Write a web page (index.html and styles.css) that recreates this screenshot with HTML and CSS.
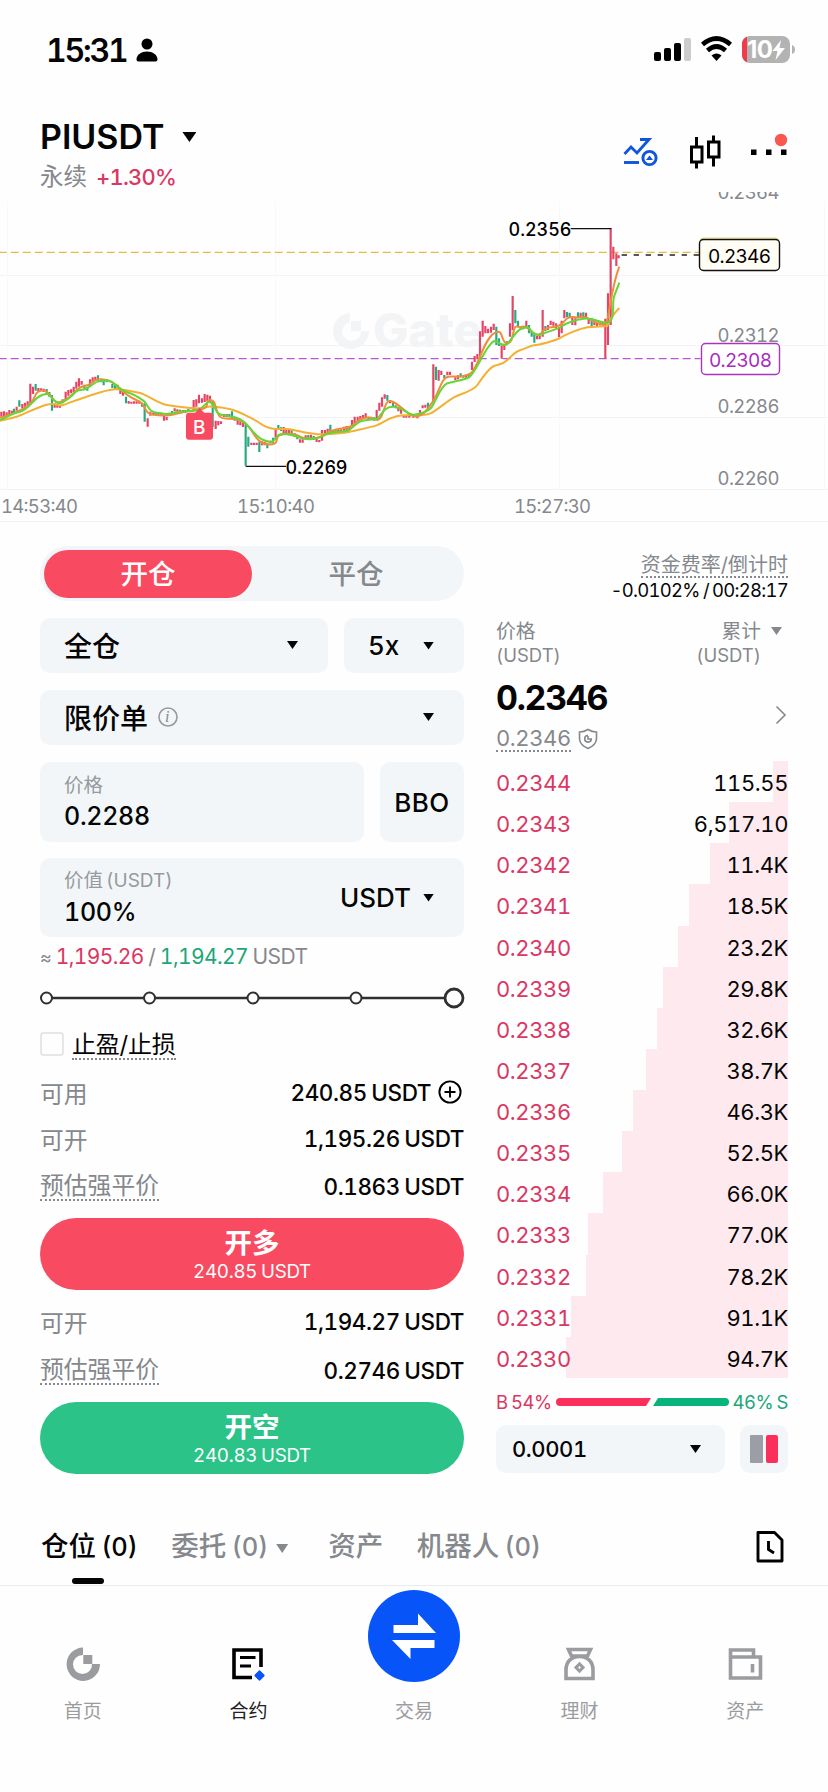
FILE: index.html
```html
<!DOCTYPE html>
<html lang="zh-CN">
<head>
<meta charset="utf-8">
<title>PIUSDT</title>
<link rel="stylesheet" href="styles.css">
</head>
<body>
<div class="status">
  <span class="clock">15:31</span>
  <svg class="person" width="22" height="24" viewBox="0 0 22 24"><circle cx="11" cy="6" r="5.5"/><path d="M.5 21.5C.5 16.500 5.500 13.500 11 13.500S21.500 16.500 21.500 21.500Q21.500 23.500 19.500 23.500H2.500Q.5 23.500.5 21.500Z"/></svg>
  <svg class="signals" width="144" height="30" viewBox="0 0 144 30">
    <rect x="1" y="17" width="7" height="9" rx="2"/><rect x="11" y="13" width="7" height="13" rx="2"/><rect x="21" y="8" width="7" height="18" rx="2"/><rect x="31" y="3" width="7" height="23" rx="2" fill="#ccc"/>
    <g fill="none" stroke="#000" stroke-width="4.600"><path d="M49.500 9.500Q63.500-2.500 77.500 9.500"/><path d="M54.500 15.500Q63.500 7.500 72.500 15.500"/></g>
    <path d="M58.500 20.500Q63.500 16.500 68.500 20.500L63.500 26Z"/>
    <rect x="89" y="1" width="48" height="27" rx="8" fill="#b3b3b3"/><path d="M94 1.800V27.200A8 8 0 0 1 89 20V9A8 8 0 0 1 94 1.800Z" fill="#f23b48"/><path d="M139 10Q142 11 142 14.500T139 19Z" fill="#b3b3b3"/>
    <text x="94" y="22.500" class="battery-text">10</text><path d="M128 5L119.500 16H124.500L122.500 25L132 13H126.500Z" fill="#fff"/>
  </svg>
</div>

<header class="header">
  <div class="pair">
    <div class="pair-name">PIUSDT <i class="caret caret-lg"></i></div>
    <div class="pair-sub"><span>永续</span><b>+1.30%</b></div>
  </div>
  <svg class="header-icons" width="170" height="46" viewBox="0 0 170 46">
    <g fill="none" stroke="#0f55de" stroke-width="2.900"><path d="M1.500 24L8 17L14 23L26 9.500H17"/><path d="M1 32.500H16"/><circle cx="26.500" cy="28" r="6.600"/></g><path d="M23 30L26.500 25.500L30 30Z" fill="#0f55de"/>
    <g fill="none" stroke="#000" stroke-width="3"><rect x="68.500" y="17" width="10.500" height="15"/><path d="M73.500 7V16M73.500 33V38.500"/><rect x="85.500" y="12" width="10.500" height="15"/><path d="M90.500 5.500V11M90.500 28V36.500"/></g>
    <path d="M128 19.500h5.500v5.500h-5.500zM143 19.500h5.500v5.500h-5.500zM158 19.500h5.500v5.500h-5.500z"/><circle cx="158" cy="10" r="6.200" fill="#f9574f"/>
  </svg>
</header>

<svg class="chart" width="828" height="330" viewBox="0 0 828 330">
  <g stroke="#f2f3f4" stroke-width="1"><path d="M0 83.500H828M0 153.500H828M0 225.500H828M0 297.500H828M0 329.500H828"/><path stroke="#f8f9f9" d="M275.500 10V297M559.500 10V297M7.500 10V297M824.500 10V297"/></g>
  <g class="watermark"><path d="M350 121A18 18 0 1 0 369 139H361A9.500 9.500 0 1 1 350 130Z"/><rect x="351" y="129" width="10" height="10"/><text x="373" y="155">Gate</text></g>
  <g transform="translate(0 -2) scale(.33333)" fill="none">
    <g stroke="#e5bb45" stroke-width="4"><path d="M-4 187H2100" stroke-dasharray="24 12"/></g>
    <path d="M-4 506H2102" stroke="#b658d0" stroke-width="4" stroke-dasharray="24 12"/>
    <path d="M1865 195H2098" stroke="#222" stroke-width="4" stroke-dasharray="16 20"/>
    <path class="up" d="M4 665V680M12 664V678M20 667V678M28 660V676M36 662V672M50 650V662M67 642V655M75 638V650M83 634V645M91 581V640M99 590V612M115 594V605M123 595V603M131 596V606M164 640V653M172 645V653M180 645V653M197 605V630M205 600V617M213 598V610M221 590V607M229 575V596M237 565V590M245 573V584M270 568V590M278 562V578M286 560V570M353 584V600M361 594V612M369 600V617M386 633V641M394 635V641M402 634V641M410 634V641M418 632V641M443 685V710M451 665V677M460 668V676M475 668V676M484 670V678M492 676V692M500 680V691M508 668V677M524 655V664M532 658V665M540 659V666M549 660V668M581 630V662M589 628V650M597 614V640M606 625V638M614 612V636M622 614V634M630 617V636M647 692V717M655 693V706M663 694V702M672 672V681M680 672V682M713 685V704M721 694V706M729 698V711M754 758V765M762 758V765M770 758V765M786 754V766M794 755V766M811 752V760M827 716V745M851 711V734M859 718V732M867 720V729M884 730V740M900 748V758M908 748V758M917 736V746M933 734V745M950 746V756M958 750V757M966 720V752M975 720V732M983 716V728M999 720V728M1015 719V728M1023 718V728M1032 710V727M1040 708V726M1048 708V721M1056 690V713M1064 680V702M1073 680V694M1081 678V690M1089 675V684M1097 670V682M1106 680V690M1130 660V688M1138 638V662M1146 622V650M1154 613V626M1170 630V640M1187 646V655M1195 650V664M1203 655V671M1211 676V683M1219 676V683M1228 676V683M1240 676V683M1252 675V685M1260 660V674M1268 646V655M1276 644V653M1300 523V635M1316 540V572M1324 542V555M1342 545V556M1350 545V555M1366 562V570M1374 556V568M1398 554V563M1416 515V540M1424 498V516M1432 492V508M1440 424V505M1448 392V440M1456 408V430M1464 416V430M1473 410V428M1481 401V420M1505 466V506M1513 462V480M1521 454V465M1530 400V440M1538 318V420M1562 410V420M1570 408V418M1579 392V415M1611 438V448M1619 436V448M1628 360V440M1644 405V420M1652 392V405M1660 395V407M1668 400V415M1677 412V442M1685 392V430M1693 360V385M1717 380V405M1726 385V406M1742 368V385M1758 368V382M1766 385V402M1783 390V405M1791 397V408M1800 398V406M1808 396V407M1816 386V506M1824 310V465M1832 114V405M1840 170V208M1849 190V228M1856 196V205"/>
    <path class="down" d="M42 656V670M58 631V650M107 582V602M140 597V615M148 606V620M156 615V662M188 628V640M253 584V594M262 590V602M294 556V572M303 566V577M311 572V586M320 568V577M337 582V594M345 585V600M378 620V640M426 638V650M434 640V695M467 667V675M516 663V674M556 660V668M565 657V666M638 632V712M688 672V682M696 664V684M704 680V692M737 700V827M745 740V770M778 755V786M802 760V775M819 743V758M835 705V718M843 712V723M875 720V732M892 736V748M925 735V746M941 738V750M991 704V725M1007 720V730M1114 680V690M1122 682V692M1162 615V632M1179 637V650M1284 638V654M1308 530V570M1333 555V565M1382 550V562M1390 555V563M1406 552V564M1489 410V465M1497 445V468M1546 360V400M1554 392V412M1587 405V430M1595 425V440M1603 430V458M1636 408V424M1701 366V382M1709 368V383M1734 367V385M1750 367V386M1775 385V410"/>
    <path stroke="#f4b131" stroke-width="6" d="M0 692C20 688 35 684 50 680S110 652 140 644S175 650 190 645S245 624 260 620S310 600 350 597C375 599 400 604 420 609S475 641 500 645S560 654 590 655S615 648 640 650S685 655 700 660S765 688 780 700S805 713 820 716S855 715 870 718S910 727 920 728S955 734 970 733S1030 730 1050 725S1115 711 1130 706S1160 687 1190 679S1272 680 1292 670S1340 634 1362 622S1419 604 1432 585S1468 534 1482 528S1506 526 1522 510S1547 484 1562 480S1590 467 1602 466S1670 452 1682 443S1740 416 1762 412L1822 408Q1832 380 1858 354"/>
    <path stroke="#f28b3b" stroke-width="6" d="M0 684C25 674 50 670 80 650S100 612 115 605S140 600 155 622S180 638 195 630S225 603 240 593S260 592 275 578S315 565 335 576S360 600 385 617S425 630 435 655S475 676 500 676S540 664 590 660S610 632 630 630S645 665 660 680S705 676 735 700S765 760 805 763S820 740 840 735S885 730 900 740S960 747 980 730S1045 718 1060 704S1100 675 1125 688S1150 640 1165 634S1205 655 1230 673S1275 670 1297 637S1325 562 1345 560S1390 565 1412 550S1450 450 1482 430S1500 460 1522 460S1535 405 1552 410S1570 400 1592 422S1620 435 1632 420S1675 420 1692 395S1730 388 1742 381S1775 394 1795 400S1820 405 1825 375S1842 270 1858 230"/>
    <path stroke="#65d538" stroke-width="6" d="M0 690C20 682 35 670 60 665S100 628 120 618S145 609 160 628S188 640 210 622S225 602 240 600S260 598 275 585S320 566 335 576S360 600 380 606S415 621 430 632S445 668 470 668S495 678 520 669S565 667 590 661S620 625 635 640S645 672 670 676S715 680 735 698S765 740 790 750S820 756 830 740S880 735 900 743S955 748 975 735S1035 729 1050 718S1070 700 1080 695S1120 689 1130 687S1150 648 1180 650S1225 676 1242 674S1280 667 1292 655S1322 586 1342 580S1392 570 1407 562S1450 491 1462 475S1480 448 1492 456S1515 470 1524 460S1547 425 1562 417S1586 411 1592 420S1610 439 1632 430S1673 418 1687 408S1720 390 1752 386S1785 396 1817 398S1835 340 1842 320L1858 278"/>
    <path stroke="#111" stroke-width="4" d="M737 829H858M1712 116H1834"/>
    <g fill="#f84b61"><rect x="558" y="668" width="81" height="81" rx="9"/><path d="M585 669L599 653L613 669Z"/></g>
  </g>
  <text class="buy-mark" x="193" y="241.500">B</text>
  <text class="extreme" x="285.500" y="282" textLength="62">0.2269</text>
  <text class="extreme" x="508.500" y="44" textLength="63">0.2356</text>
  <g class="axis">
    <text x="717.500" y="7" textLength="62">0.2364</text><text x="717.500" y="150" textLength="62">0.2312</text><text x="717.500" y="221" textLength="62">0.2286</text><text x="717.500" y="293" textLength="62">0.2260</text>
    <text x="1" y="321" textLength="77">14:53:40</text><text x="237" y="321" textLength="78">15:10:40</text><text x="514" y="321" textLength="77">15:27:30</text>
  </g>
  <rect x="699.500" y="46" width="80" height="32" rx="4" fill="#fff" stroke="#e5d777"/>
  <rect x="699.500" y="47.500" width="80" height="31" rx="4" fill="#fffcf4" stroke="#111" stroke-width="1.400"/>
  <rect x="701.500" y="151.500" width="78" height="31" rx="4" fill="#fff" stroke="#a735bd" stroke-width="1.400"/>
  <text class="tag" x="708" y="71" textLength="63">0.2346</text><text class="tag tag-purple" x="709" y="175" textLength="63">0.2308</text>
</svg>

<main class="trade">
  <section class="form">
    <div class="mode"><span class="mode-on">开仓</span><span>平仓</span></div>
    <div class="row row-select"><div class="box grow">全仓<i class="caret"></i></div><div class="box lever">5x<i class="caret"></i></div></div>
    <div class="row row-select"><div class="box grow">限价单<svg class="info" width="22" height="22" viewBox="0 0 22 22"><circle cx="11" cy="11" r="9" fill="none" stroke="#96999e" stroke-width="1.600"/><text x="8" y="16">i</text></svg><i class="caret"></i></div></div>
    <div class="row row-input"><div class="box grow field"><small>价格</small><span>0.2288</span></div><div class="box bbo">BBO</div></div>
    <div class="row row-input last-input"><div class="box grow"><div class="field-inner"><small>价值<em> (USDT)</em></small><span>100%</span></div><span class="unit">USDT</span><i class="caret"></i></div></div>
    <div class="approx"><span class="tilde">≈</span> <span class="red">1,195.26</span> / <span class="green">1,194.27</span> USDT</div>
    <svg class="slider" width="426" height="24" viewBox="0 0 426 24" fill="#fff" stroke="#303030"><path d="M6 12H414" stroke-width="2.600"/><g stroke-width="2"><circle cx="6.500" cy="12" r="5.500"/><circle cx="109.500" cy="12" r="5.500"/><circle cx="213" cy="12" r="5.500"/><circle cx="316" cy="12" r="5.500"/></g><circle cx="414" cy="12" r="9" stroke-width="2.800"/></svg>
    <div class="tpsl"><i class="check"></i><span class="dotted">止盈/止损</span></div>
    <div class="info-row avail"><label>可用</label><span>240.85 USDT</span><svg width="24" height="24" viewBox="0 0 24 24" fill="none" stroke="#000" stroke-width="1.900"><circle cx="12" cy="12" r="10.600"/><path d="M6.500 12H17.500M12 6.500V17.500"/></svg></div>
    <div class="info-row"><label>可开</label><span>1,195.26 USDT</span></div>
    <div class="info-row liq"><label class="dotted">预估强平价</label><span>0.1863 USDT</span></div>
    <div class="action long"><b>开多</b><span>240.85 USDT</span></div>
    <div class="info-row after"><label>可开</label><span>1,194.27 USDT</span></div>
    <div class="info-row liq"><label class="dotted">预估强平价</label><span>0.2746 USDT</span></div>
    <div class="action short"><b>开空</b><span>240.83 USDT</span></div>
  </section>

  <section class="book">
    <div class="funding"><span class="dotted">资金费率/倒计时</span></div>
    <div class="funding-value">-0.0102% / 00:28:17</div>
    <div class="book-head"><div>价格<br><em>(USDT)</em></div><div class="head-right">累计<br><em>(USDT)</em></div><i class="caret caret-gray"></i></div>
    <div class="last"><div><div class="last-price">0.2346</div><div class="mark"><span class="dotted">0.2346</span><svg width="20" height="22" viewBox="0 0 20 22" fill="none" stroke="#85888c" stroke-width="1.600"><path d="M10 1.500Q14 4 18.500 4V11Q18 17 10 20.500Q2 17 1.500 11V4Q6 4 10 1.500Z"/><path d="M10 7.500A3.300 3.300 0 1 0 13.300 11H10V8"/></svg></div></div><svg class="chevron" width="12" height="20" viewBox="0 0 12 20" fill="none" stroke="#85888c" stroke-width="1.600"><path d="M1.500 1.500L10 10L1.500 18.500"/></svg></div>
    <div class="orders">
      <div class="order"><i style="width:15px"></i><span>0.2344</span><b>115.55</b></div>
      <div class="order"><i style="width:59.500px"></i><span>0.2343</span><b>6,517.10</b></div>
      <div class="order"><i style="width:78px"></i><span>0.2342</span><b>11.4K</b></div>
      <div class="order"><i style="width:99px"></i><span>0.2341</span><b>18.5K</b></div>
      <div class="order"><i style="width:110px"></i><span>0.2340</span><b>23.2K</b></div>
      <div class="order"><i style="width:125.500px"></i><span>0.2339</span><b>29.8K</b></div>
      <div class="order"><i style="width:131px"></i><span>0.2338</span><b>32.6K</b></div>
      <div class="order"><i style="width:142px"></i><span>0.2337</span><b>38.7K</b></div>
      <div class="order"><i style="width:155.500px"></i><span>0.2336</span><b>46.3K</b></div>
      <div class="order"><i style="width:166px"></i><span>0.2335</span><b>52.5K</b></div>
      <div class="order"><i style="width:185px"></i><span>0.2334</span><b>66.0K</b></div>
      <div class="order"><i style="width:200px"></i><span>0.2333</span><b>77.0K</b></div>
      <div class="order"><i style="width:202px"></i><span>0.2332</span><b>78.2K</b></div>
      <div class="order"><i style="width:217.500px"></i><span>0.2331</span><b>91.1K</b></div>
      <div class="order"><i style="width:222px"></i><span>0.2330</span><b>94.7K</b></div>
    </div>
    <div class="ratio"><span class="red">B 54%</span><svg width="173" height="8" viewBox="0 0 173 8"><path d="M4 0H95L90 8H4A4 4 0 0 1 4 0Z" fill="#fb305a"/><path d="M102 0H169A4 4 0 0 1 169 8H97Z" fill="#07b57c"/></svg><span class="green">46% S</span></div>
    <div class="precision"><div class="box grow">0.0001<i class="caret"></i></div><div class="box depth"><i></i><i></i></div></div>
  </section>
</main>

<div class="tabs">
  <span class="tab tab-on">仓位 <em>(0)</em></span><span class="tab tab-orders">委托 <em>(0)</em><i class="caret caret-gray"></i></span><span class="tab tab-assets">资产</span><span class="tab">机器人 <em>(0)</em></span>
  <svg class="history" width="28" height="34" viewBox="0 0 28 34" fill="none" stroke="#000" stroke-width="2.900" stroke-linejoin="round"><path d="M2 2.500H18.500L26 10V31H2Z"/><path d="M12.500 11V19.500L18 23" stroke-linejoin="miter"/></svg>
</div>

<nav class="nav">
  <div class="nav-item"><svg width="36" height="36" viewBox="0 0 36 36" fill="#9b9c9f"><path d="M18 1.500A16.700 16.700 0 1 0 35 18H27A9.500 9.500 0 1 1 18 9Z"/><rect x="18.300" y="9" width="9" height="9"/></svg><span>首页</span></div>
  <div class="nav-item nav-on"><svg width="36" height="36" viewBox="0 0 36 36"><path d="M31 21V4H4V31.500H22" fill="none" stroke="#000" stroke-width="3.600"/><path d="M10 11.500H25.500M10 20H21" stroke="#000" stroke-width="3"/><rect x="25.500" y="25.500" width="8" height="8" rx="1.500" fill="#0755f8" transform="rotate(45 29.500 29.500)"/></svg><span>合约</span></div>
  <div class="nav-item nav-trade"><div class="swap"><svg width="46" height="46" viewBox="0 0 46 46" fill="#fff"><path d="M2.500 12H27V.5L45 20H2.500Z"/><path d="M43.500 27V35H19.500V46L1 27Z"/></svg></div><span>交易</span></div>
  <div class="nav-item"><svg width="36" height="36" viewBox="0 0 36 36" fill="none" stroke="#9b9c9f" stroke-width="3.600"><path d="M6.500 3.500H28.500L25.500 10H9.500Z"/><path d="M4 32.500V24C4 15 10 10.500 17.500 10.500S31 15 31 24V32.500Z"/><rect x="15" y="19" width="5" height="5" stroke-width="3" transform="rotate(45 17.500 21.500)"/></svg><span>理财</span></div>
  <div class="nav-item"><svg width="36" height="36" viewBox="0 0 36 36" fill="none" stroke="#9b9c9f" stroke-width="3.600"><path d="M26.500 10V4H3.500V32H33.500V11H3.500"/><path d="M25.500 18V26.500"/></svg><span>资产</span></div>
</nav>
</body>
</html>
```

FILE: styles.css
```css
* { box-sizing: border-box; }
body { margin: 0; width: 828px; height: 1792px; overflow: hidden; background: #fefefe; color: #050505; font-family: Inter, "Noto Sans CJK SC", sans-serif; font-variant-numeric: tabular-nums; word-spacing: -1px; }
em, i { font-style: normal; }
.red { color: #da3763; }
.green { color: #1ba777; }

.status { height: 100px; padding: 35px 31px 0 46px; display: flex; align-items: flex-start; }
.clock { font-size: 32px; line-height: 32px; font-weight: 600; width: 90px; letter-spacing: -2.200px; }
.person { margin-top: 3px; }
.signals { margin-left: auto; }
.battery-text { font: 700 24px Inter, sans-serif; fill: #fff; letter-spacing: -.5px; }

.header { height: 92px; padding: 18px 35px 0 40px; display: flex; justify-content: space-between; }
.pair-name { font-size: 34px; line-height: 38px; font-weight: 600; display: flex; align-items: center; gap: 18px; letter-spacing: 0; }
.pair-sub { display: flex; gap: 9px; font-size: 23.500px; line-height: 30px; margin-top: 6px; color: #85888c; }
.pair-sub b { font-size: 22px; font-weight: 500; color: #da3763; letter-spacing: -.8px; }
.header-icons { margin-top: 12px; }
.caret { width: 11px; height: 8px; background: currentColor; clip-path: polygon(0 0, 100% 0, 50% 100%); flex: none; }
.caret-lg { width: 14px; height: 10px; }
.caret-gray { background: #85888c; }

.chart { display: block; }
.chart text { font-family: Inter, sans-serif; }
.up { stroke: #e34565; stroke-width: 6.500; }
.down { stroke: #26aa82; stroke-width: 6.500; }
.watermark { fill: #f3f4f5; }
.watermark text { font-size: 47px; font-weight: 800; }
.extreme { font-size: 18px; font-weight: 500; }
.axis { font-size: 18.500px; fill: #85888c; }
.tag { font-size: 19px; }
.tag-purple { fill: #a72dbe; }
.buy-mark { font-size: 19px; font-weight: 500; fill: #fff; }

.trade { height: 986px; padding: 24px 40px 0; display: flex; gap: 32px; }
.form { width: 424px; }
.book { width: 292px; }
.box { background: #f3f6f8; border-radius: 10px; display: flex; align-items: center; padding: 0 30px 0 24px; }
.grow { flex: 1; }
.box > .caret { margin-left: auto; }
.mode { height: 55px; border-radius: 28px; background: #f3f6f8; padding: 4px; display: flex; }
.mode span { flex: 1; border-radius: 26px; text-align: center; font-size: 27.500px; line-height: 49px; height: 48px; font-weight: 500; color: #85888c; }
.mode .mode-on { color: #fff; background: #f84b61; }
.row { display: flex; gap: 16px; }
.row-select { margin-top: 17px; height: 55px; font-size: 28px; font-weight: 500; }
.row-select .box { padding-bottom: 1px; }
.lever { width: 120px; }
.row-select .lever { font-size: 26px; padding-bottom: 0; }
.info { margin-left: 9px; }
.info text { font: italic 16px "Liberation Serif", serif; fill: #85888c; }
.row-input { margin-top: 17px; height: 80px; font-size: 26px; font-weight: 500; }
.last-input { margin-top: 16px; height: 79px; }
.field { flex-direction: column; align-items: flex-start; padding-top: 8px; }
.field small, .field-inner small { display: block; font-size: 19.500px; line-height: 30px; font-weight: 400; color: #96999e; }
.field-inner small { word-spacing: -2px; }
.field small em, .field-inner small em { font-size: 19px; }
.field span, .field-inner span { display: block; font-size: 25px; line-height: 32px; letter-spacing: -.3px; }
.field-inner { margin-top: -2px; }
.bbo { width: 84px; padding: 0; justify-content: center; font-size: 26px; letter-spacing: .4px; }
.unit { margin-left: auto; font-size: 26px; }
.box > .unit + .caret { margin-left: 12px; }
.approx { height: 39px; line-height: 39px; font-size: 21px; color: #85888c; letter-spacing: -.6px; white-space: nowrap; word-spacing: -.5px; }
.tilde { font-size: 18px; }
.slider { display: block; margin-top: 10px; }
.tpsl { display: flex; align-items: center; gap: 8px; margin-top: 18px; height: 32px; font-size: 24px; }
.check { width: 24px; height: 24px; border: 2px solid #e5e6e8; border-radius: 4px; }
.dotted { border-bottom: 2px dotted #85888c; line-height: 26px; }
.tpsl .dotted { line-height: 27px; margin-top: 2px; letter-spacing: -.2px; }
.info-row { height: 46px; display: flex; align-items: center; font-size: 22.500px; font-weight: 500; letter-spacing: -.45px; }
.info-row label { margin-right: auto; color: #85888c; font-size: 23.800px; font-weight: 400; letter-spacing: 0; }
.avail { margin-top: 9px; }
.avail svg { margin: 0 2px 0 7px; }
.liq { height: 50px; }
.liq label { padding-top: 1px; }
.action { height: 72px; border-radius: 36px; color: #fff; text-align: center; padding-top: 10px; margin-top: 7px; }
.action b { display: block; font-size: 27.500px; line-height: 30px; }
.action span { display: block; font-size: 18.800px; line-height: 27px; letter-spacing: -.3px; }
.long { background: #f84b61; }
.short { background: #2cc388; }
.after { margin-top: 8px; }
.after + .liq { margin-top: 1px; }

.funding { margin-top: 7px; height: 26px; text-align: right; font-size: 20px; color: #85888c; }
.funding .dotted { display: inline-block; line-height: 22px; }
.funding-value { font-size: 18.500px; line-height: 23px; text-align: right; letter-spacing: -.75px; }
.book-head { display: flex; margin-top: 17px; font-size: 19.800px; line-height: 24px; color: #85888c; }
.book-head em { font-size: 18.500px; }
.head-right { margin-left: auto; text-align: right; }
.book-head .caret { margin: 8px 6px 0 10px; }
.last { margin-top: 10px; height: 84px; display: flex; justify-content: space-between; }
.last-price { font-size: 34px; line-height: 42px; font-weight: 700; letter-spacing: -1.300px; }
.mark { display: flex; align-items: center; gap: 7px; font-size: 22px; color: #85888c; margin-top: 7px; letter-spacing: -.4px; }
.mark .dotted { line-height: 24px; }
.chevron { margin: 28px 1px 0 0; }
.order { position: relative; height: 41.130px; padding-top: 3px; display: flex; align-items: center; justify-content: space-between; font-size: 22px; letter-spacing: -.4px; }
.order i { position: absolute; right: 0; top: 0; height: 100%; background: #feeaee; }
.order span, .order b { position: relative; font-weight: 400; }
.order span { color: #da3763; }
.ratio { height: 24px; margin-top: 12px; display: flex; align-items: center; justify-content: space-between; font-size: 18.500px; white-space: nowrap; letter-spacing: -.5px; }
.precision { margin-top: 11px; display: flex; gap: 15px; height: 48px; }
.precision .box { padding-left: 16px; padding-right: 24px; font-size: 22px; font-weight: 500; letter-spacing: -.4px; }
.precision .depth { width: 48px; padding: 0; gap: 3px; justify-content: center; }
.depth i { width: 12.500px; height: 28px; background: #9b9fa5; border-radius: 1px; }
.depth i + i { background: #fb305a; border-radius: 2px; }

.tabs { height: 78px; padding: 17px 44px 0 41px; display: flex; border-bottom: 1px solid #ebecee; font-size: 27.500px; line-height: 42px; font-weight: 500; color: #85888c; white-space: nowrap; word-spacing: -2px; }
.tabs em { font-size: 25.500px; }
.tab { margin-right: 33.500px; position: relative; }
.tab-orders { margin-right: 40px; }
.tab-on { color: #050505; }
.tab-on::after { content: ""; position: absolute; left: 31px; top: 53px; width: 32px; height: 6px; border-radius: 3px; background: #050505; }
.tab .caret { display: inline-block; width: 12px; height: 9px; margin: 0 0 3px 8px; }
.history { margin: 5px 0 0 auto; }

.nav { display: flex; height: 206px; }
.nav-item { width: 165.600px; padding-top: 60px; display: flex; flex-direction: column; align-items: center; font-size: 19px; line-height: 28px; color: #9b9c9f; }
.nav-item > span { margin-top: 15.500px; }
.nav-on { color: #202124; }
.nav-trade { padding-top: 4px; }
.swap { width: 92px; height: 92px; border-radius: 50%; background: #0755f8; display: flex; align-items: center; justify-content: center; }
```
